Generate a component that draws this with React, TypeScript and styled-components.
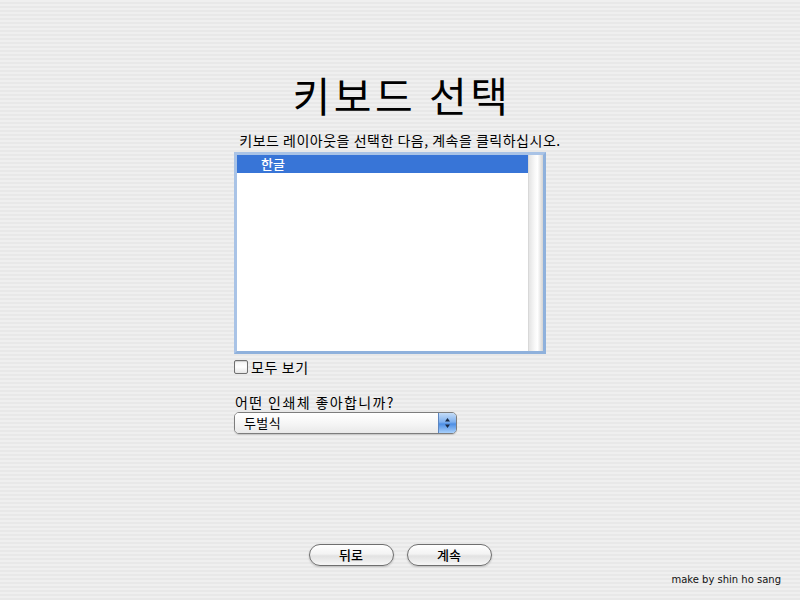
import styled, { createGlobalStyle } from 'styled-components';

const GlobalStyle = createGlobalStyle`
  html, body {
    margin: 0;
    padding: 0;
  }
  body {
    font-family: "Noto Sans CJK KR", "DejaVu Sans", sans-serif;
    color: #000;
  }
`;

const Page = styled.div`
  width: 800px;
  height: 600px;
  display: flex;
  flex-direction: column;
  align-items: center;
  background: repeating-linear-gradient(
    180deg,
    #efefef 0px,
    #efefef 2px,
    #e8e8e8 2px,
    #e8e8e8 4px
  );
  overflow: hidden;
`;

const Title = styled.h1`
  margin: 68px 0 0 0;
  font-size: 41px;
  font-weight: 400;
  line-height: 52px;
  letter-spacing: 3.5px;
  padding-left: 4px;
`;

const Column = styled.div`
  width: 332px;
  display: flex;
  flex-direction: column;
`;

const Instruction = styled.p`
  margin: 11px 0 0 0;
  font-size: 14px;
  line-height: 18px;
  text-align: center;
  letter-spacing: 0.5px;
`;

const ListBox = styled.div`
  margin-top: 3px;
  width: 306px;
  height: 196px;
  border: 3px solid #9dbbe2;
  border-color: #a9c3e6 #8fb1dc #8fb1dc #a9c3e6;
  background: #fff;
  display: flex;
`;

const ListItems = styled.div`
  flex: 1;
`;

const ListRow = styled.div<{ $selected?: boolean }>`
  height: 18px;
  line-height: 18px;
  padding-left: 24px;
  font-size: 13px;
  font-weight: 500;
  color: ${(p) => (p.$selected ? '#fff' : '#000')};
  background: ${(p) => (p.$selected ? '#3875d7' : 'transparent')};
`;

const ScrollTrack = styled.div`
  width: 14px;
  background: linear-gradient(90deg, #e4e4e4 0%, #f8f8f8 40%, #ffffff 60%, #d4d4d4 100%);
  border-left: 1px solid #d8d8d8;
`;

const CheckRow = styled.label`
  margin-top: 5px;
  display: flex;
  align-items: center;
  gap: 3px;
  font-size: 14px;
  line-height: 16px;
  letter-spacing: 0.6px;
`;

const CheckBox = styled.span`
  width: 12px;
  height: 12px;
  border: 1px solid #707070;
  border-radius: 2px;
  background: linear-gradient(180deg, #f4f4f4 0%, #ffffff 50%, #e6e6e6 100%);
  box-shadow: inset 0 1px 1px rgba(0, 0, 0, 0.15);
`;

const Question = styled.p`
  margin: 18px 0 0 0;
  font-size: 14px;
  line-height: 18px;
  letter-spacing: 1.4px;
  padding-left: 1px;
`;

const Popup = styled.div`
  margin-top: 1px;
  width: 221px;
  height: 20px;
  border: 1px solid #7d7d7d;
  border-radius: 5px;
  display: flex;
  overflow: hidden;
  box-shadow: 0 1px 1px rgba(0, 0, 0, 0.15);
`;

const PopupLabel = styled.div`
  flex: 1;
  padding-left: 9px;
  font-size: 13px;
  line-height: 20px;
  letter-spacing: 0.4px;
  background: linear-gradient(180deg, #ffffff 0%, #f6f6f6 50%, #e9e9e9 100%);
`;

const PopupArrows = styled.div`
  width: 17px;
  border-left: 1px solid #5d86c0;
  background: linear-gradient(180deg, #c4dcf7 0%, #7fb0ee 45%, #4d8ee4 55%, #a8d0fb 100%);
  display: flex;
  align-items: center;
  justify-content: center;
`;

const Spacer = styled.div`
  flex: 1;
`;

const ButtonRow = styled.div`
  display: flex;
  gap: 13px;
`;

const PillButton = styled.button`
  width: 85px;
  height: 22px;
  border: 1px solid #6f6f6f;
  border-radius: 11px;
  background: linear-gradient(180deg, #ffffff 0%, #f3f3f3 45%, #e2e2e2 55%, #f6f6f6 100%);
  box-shadow: 0 1px 2px rgba(0, 0, 0, 0.2);
  font-family: "Noto Sans CJK KR", sans-serif;
  font-size: 13px;
  font-weight: 500;
  line-height: 18px;
  color: #000;
  padding: 0;
`;

const Footer = styled.div`
  align-self: stretch;
  display: flex;
  justify-content: flex-end;
  padding: 7px 19px 13px 0;
  font-family: "DejaVu Sans", sans-serif;
  font-size: 10px;
  line-height: 14px;
  color: #111;
`;

export default function App() {
  return (
    <>
      <GlobalStyle />
      <Page>
        <Title>키보드 선택</Title>
        <Column>
          <Instruction>키보드 레이아웃을 선택한 다음, 계속을 클릭하십시오.</Instruction>
          <ListBox>
            <ListItems>
              <ListRow $selected>한글</ListRow>
            </ListItems>
            <ScrollTrack />
          </ListBox>
          <CheckRow>
            <CheckBox />
            모두 보기
          </CheckRow>
          <Question>어떤 인쇄체 좋아합니까?</Question>
          <Popup>
            <PopupLabel>두벌식</PopupLabel>
            <PopupArrows>
              <svg width="7" height="12" viewBox="0 0 7 12">
                <path d="M3.5 1 L6 4.5 L1 4.5 Z" fill="#1a2a44" />
                <path d="M3.5 11 L6 7.5 L1 7.5 Z" fill="#1a2a44" />
              </svg>
            </PopupArrows>
          </Popup>
        </Column>
        <Spacer />
        <ButtonRow>
          <PillButton>뒤로</PillButton>
          <PillButton>계속</PillButton>
        </ButtonRow>
        <Footer>make by shin ho sang</Footer>
      </Page>
    </>
  );
}
